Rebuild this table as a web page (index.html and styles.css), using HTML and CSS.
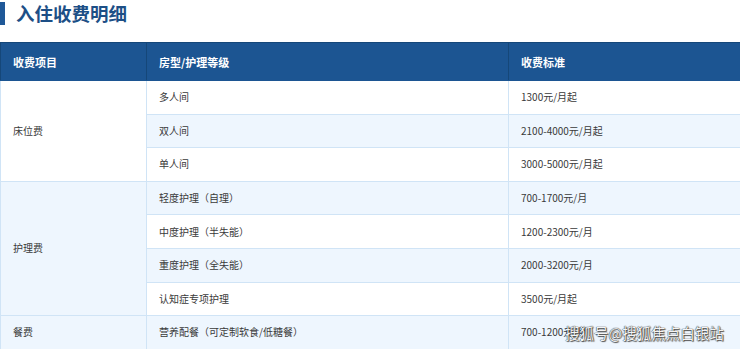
FILE: index.html
```html
<!DOCTYPE html>
<html lang="zh-CN">
<head>
<meta charset="utf-8">
<title>入住收费明细</title>
<link rel="stylesheet" href="styles.css">
</head>
<body>
<div class="page">
  <h2 class="title"><span class="bar"></span>入住收费明细</h2>
  <table class="fees">
    <colgroup>
      <col class="c1"><col class="c2"><col class="c3">
    </colgroup>
    <thead>
      <tr><th>收费项目</th><th>房型/护理等级</th><th>收费标准</th></tr>
    </thead>
    <tbody>
      <tr class="w"><td rowspan="3" class="cat w">床位费</td><td>多人间</td><td>1300元/月起</td></tr>
      <tr class="b"><td>双人间</td><td>2100-4000元/月起</td></tr>
      <tr class="w"><td>单人间</td><td>3000-5000元/月起</td></tr>
      <tr class="b"><td rowspan="4" class="cat b">护理费</td><td>轻度护理（自理）</td><td>700-1700元/月</td></tr>
      <tr class="w"><td>中度护理（半失能）</td><td>1200-2300元/月</td></tr>
      <tr class="b"><td>重度护理（全失能）</td><td>2000-3200元/月</td></tr>
      <tr class="w"><td>认知症专项护理</td><td>3500元/月起</td></tr>
      <tr class="b"><td class="cat b">餐费</td><td>营养配餐（可定制软食/低糖餐）</td><td>700-1200元/月</td></tr>
    </tbody>
  </table>
  <div class="watermark">搜狐号@搜狐焦点白银站</div>
</div>
</body>
</html>
```
FILE: styles.css
```css
html, body {
  margin: 0;
  padding: 0;
  background: #ffffff;
  overflow: hidden;
}
.page {
  position: relative;
  width: 740px;
  height: 349px;
  overflow: hidden;
  font-family: "Noto Sans CJK SC", "Noto Sans", sans-serif;
}
.title {
  display: flex;
  align-items: center;
  margin: 0;
  height: 26px;
  font-size: 18.5px;
  font-weight: 700;
  color: #1d4f86;
  line-height: 26px;
}
.bar {
  display: block;
  width: 5px;
  height: 23px;
  margin-top: 1px;
  background: #1f5898;
  margin-right: 11px;
}
.fees {
  margin-top: 16px;
  width: 760px;
  border-collapse: collapse;
  table-layout: fixed;
  font-size: 10px;
  color: #3a3a3a;
}
.c1 { width: 146px; }
.c2 { width: 362px; }
.c3 { width: 252px; }
.fees th {
  background: #1c5592;
  color: #ffffff;
  font-size: 11px;
  font-weight: 700;
  text-align: left;
  height: 38px;
  padding: 0 12px;
  border-top: 1px solid #154779;
  border-left: 1px solid #154779;
  border-bottom: 1px solid #1c5592;
  box-sizing: border-box;
}
.fees tbody tr { height: 33.6px; }
.fees td {
  padding: 0 12px;
  border: 1px solid #d0e4f6;
  text-align: left;
  vertical-align: middle;
  line-height: 14px;
}
tr.w td { background: #ffffff; }
tr.b td { background: #eef6fe; }
td.cat.w { background: #ffffff; }
td.cat.b { background: #eef6fe; }
.watermark {
  position: absolute;
  left: 565px;
  top: 322px;
  font-size: 14.5px;
  line-height: 22px;
  color: #f4f4f4;
  text-shadow: 0 0 1px #333, 0 0 1px #333, 1px 1px 1px #555;
  white-space: nowrap;
}
```
